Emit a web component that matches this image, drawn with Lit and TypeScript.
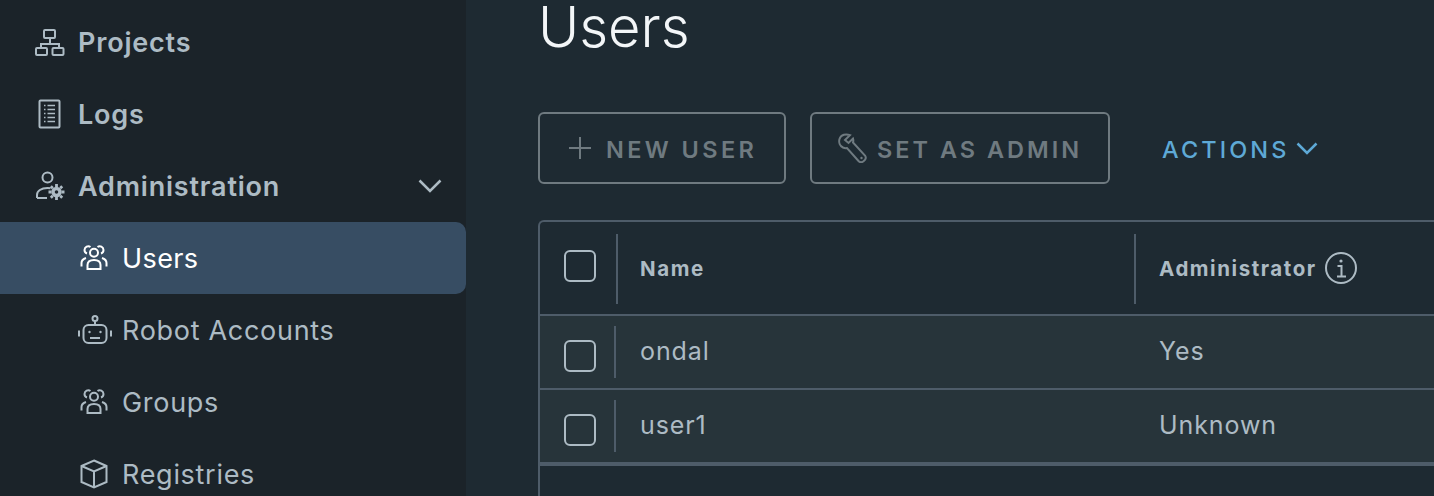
import { LitElement, html, css, svg } from "lit";
import { customElement } from "lit/decorators.js";

const ic = (w: number, h: number, body: unknown, cls = "ic") => html`<svg class=${cls} width=${w} height=${h} viewBox="0 0 ${w} ${h}" fill="none" stroke="currentColor" stroke-width="2">${body}</svg>`;

const people = svg`<circle cx="16" cy="8.700" r="4"/><path d="M9.500 25V21c0-3 2.500-5 6.500-5s6.500 2 6.500 5v4z"/><path d="M9 9.500A3.600 3.600 0 0 1 6.500 6 3.800 3.800 0 0 1 12.500 3"/><path d="M23 9.500A3.600 3.600 0 0 0 25.500 6 3.800 3.800 0 0 0 19.500 3"/><path d="M3.500 22.500V19c0-2.200 1.500-4 4.500-5M28.500 22.500V19c0-2.200-1.500-4-4.500-5"/>`;

const chevron = (w: number, h: number) => ic(w, h, svg`<path stroke-width="2.500" d="M1.500 1.500 ${w / 2} ${h - 2} ${w - 1.5} 1.500"/>`);

const icons = {
  projects: ic(30, 28, svg`<rect x="9" y="2" width="11" height="8" rx="1"/><path d="M15 10v6M6 20v-4h18v4"/><rect x="1" y="20" width="11" height="7" rx="1"/><rect x="17.500" y="20" width="11" height="7" rx="1"/>`),
  logs: ic(24, 30, svg`<rect x="1.500" y="1.500" width="20" height="27" rx="1"/><g stroke-width="1.600"><path d="M6 6.500h1.500M9.500 6.500H17M6 10.500h1.500M9.500 10.500H17M6 14.500h1.500M9.500 14.500H17M6 18.500h1.500M9.500 18.500H17M6 22.500h1.500M9.500 22.500H17"/></g>`),
  admin: ic(30, 30, svg`<circle cx="12.500" cy="6.500" r="5"/><path d="M2 27v-3c0-4 4-7 10.500-7 1 0 2 .1 3 .3M2 27h10"/><g transform="translate(21.500 21)"><circle r="3.500" stroke-width="3.400"/><path stroke-width="2.800" d="M0-8v3M0 8V5M-8 0h3M8 0H5M-5.700-5.700l2 2M5.700 5.700l-2-2M5.700-5.700l-2 2M-5.700 5.700l2-2"/></g>`),
  users: ic(32, 28, people),
  robot: ic(34, 30, svg`<circle cx="17" cy="3.500" r="2.500"/><path d="M17 6v4"/><rect x="5.500" y="10" width="23" height="18" rx="5"/><circle cx="11.500" cy="17" r="1.200" fill="currentColor" stroke="none"/><circle cx="22.500" cy="17" r="1.200" fill="currentColor" stroke="none"/><path d="M12 23h10M1 15.500v6M33 15.500v6"/>`),
  box: ic(28, 30, svg`<path d="M14 1.500 26.500 7v16L14 28.500 1.500 23V7z"/><path d="M1.500 7 14 12.500 26.500 7M14 12.500v16"/>`),
};

@customElement("app-root")
export class AppRoot extends LitElement {
  static styles = css`
    :host { display: block; width: 1434px; height: 496px; overflow: hidden; font-family: Inter, "Liberation Sans", sans-serif; }
    .page { display: flex; height: 496px; overflow: hidden; background: #1e2a32; }
    nav { width: 466px; flex: none; background: #1b2329; padding-top: 6px; color: #adbbc4; }
    .item { height: 72px; display: flex; align-items: center; font-size: 27px; letter-spacing: 0.7px; }
    .top { padding-left: 35px; font-weight: 600; letter-spacing: .8px; }
    .top .box { width: 43px; display: flex; }
    .top .box.logs { padding-left: 3px; width: 40px; }
    .sub { padding-left: 78px; font-weight: 400; }
    .sub .box { width: 44px; display: flex; }
    .sub .box.cube { padding-left: 2px; width: 42px; }
    .sel { background: #374d63; color: #fff; border-radius: 0 10px 10px 0; letter-spacing: .4px; }
    .chev { margin-left: auto; margin-right: 24px; }
    main { flex: 1; padding-left: 72px; min-width: 0; }
    h1 { margin: 0; font-size: 56px; line-height: 54px; font-weight: 300; color: #f3f6f8; }
    .bar { display: flex; align-items: center; margin-top: 58px; }
    .btn { height: 72px; box-sizing: border-box; border: 2px solid #6f7a80; border-radius: 6px; display: flex; align-items: center; color: #6f7a80; font-size: 23.500px; font-weight: 600; white-space: nowrap; }
    .t { padding-top: 3px; }
    .b1 { width: 248px; padding-left: 28px; gap: 14px; margin-right: 24px; letter-spacing: 3.400px; }
    .b2 { width: 300px; padding-left: 25px; gap: 10px; margin-right: 52px; letter-spacing: 3px; }
    .act { display: flex; align-items: center; gap: 7px; color: #5ea9d6; font-size: 23.500px; font-weight: 500; letter-spacing: 3.100px; }
    .table { margin-top: 36px; border: 2px solid #4e5c69; border-right: 0; border-bottom: 0; border-radius: 6px 0 0 0; height: 300px; }
    .row { display: flex; align-items: center; color: #adbbc4; font-size: 25px; letter-spacing: .9px; }
    .head { height: 92px; font-size: 20.500px; font-weight: 700; letter-spacing: 1.550px; }
    .body { height: 72px; background: #27343a; border-top: 2px solid #4e5c69; }
    .body.last { border-bottom: 4px solid #4e5c69; }
    .cbcell { box-sizing: border-box; padding-left: 24px; display: flex; align-items: center; border-right: 2px solid #4e5c69; }
    .head .cbcell { width: 78px; height: 70px; margin-top: 2px; padding-bottom: 6px; }
    .body .cbcell { width: 76px; height: 52px; padding-top: 8px; }
    .cb { width: 32px; height: 32px; box-sizing: border-box; border: 2px solid #adbbc4; border-radius: 6px; }
    .name { box-sizing: border-box; padding-left: 22px; }
    .head .name { width: 518px; height: 70px; margin-top: 2px; padding-bottom: 2px; display: flex; align-items: center; border-right: 2px solid #4e5c69; }
    .body .name { width: 519px; padding-left: 24px; padding-bottom: 2px; }
    .admin { padding-left: 23px; display: flex; align-items: center; gap: 8px; }
    .body .admin { padding-left: 24px; padding-bottom: 2px; }
  `;

  private row(n: string, a: string, last = false) {
    return html`<div class="row body ${last ? "last" : ""}"><div class="cbcell"><div class="cb"></div></div><div class="name">${n}</div><div class="admin">${a}</div></div>`;
  }

  render() {
    return html`<div class="page">
      <nav>
        <div class="item top"><span class="box">${icons.projects}</span>Projects</div>
        <div class="item top"><span class="box logs">${icons.logs}</span>Logs</div>
        <div class="item top"><span class="box">${icons.admin}</span>Administration
          ${ic(24, 14, svg`<path stroke-width="2.500" d="M1.500 1.500 12 12 22.500 1.500"/>`, "chev")}</div>
        <div class="item sub sel"><span class="box">${icons.users}</span>Users</div>
        <div class="item sub"><span class="box">${icons.robot}</span>Robot Accounts</div>
        <div class="item sub"><span class="box">${icons.users}</span>Groups</div>
        <div class="item sub"><span class="box cube">${icons.box}</span>Registries</div>
      </nav>
      <main>
        <h1>Users</h1>
        <div class="bar">
          <div class="btn b1">${ic(24, 24, svg`<path d="M12 1v22M1 12h22"/>`)}<span class="t">NEW USER</span></div>
          <div class="btn b2">${ic(30, 30, svg`<path d="M13 2.200C9 .5 4 1.500 2.500 6 1.500 9.500 3 13 6 14.500c1.500.7 3 .7 4 .5l11.500 13c1.500 1.500 3.500 1.500 5 .2l1.300-1.200c1.400-1.500 1.200-3 .2-4.500L16 9.500c.5-1.500.5-2.500 0-4l-4.500 4.500L8 7z"/><circle cx="24.500" cy="25" r="1.200" fill="currentColor" stroke="none"/>`)}<span class="t">SET AS ADMIN</span></div>
          <div class="act"><span class="t">ACTIONS</span>${chevron(22, 13)}</div>
        </div>
        <div class="table">
          <div class="row head"><div class="cbcell"><div class="cb"></div></div><div class="name">Name</div>
            <div class="admin">Administrator ${ic(32, 32, svg`<circle cx="16" cy="16" r="15"/><path d="M12.500 14H16.500V24M12 24.500h9"/><circle cx="16" cy="9" r="1.600" fill="currentColor" stroke="none"/>`)}</div></div>
          ${this.row("ondal", "Yes")}
          ${this.row("user1", "Unknown", true)}
        </div>
      </main>
    </div>`;
  }
}
